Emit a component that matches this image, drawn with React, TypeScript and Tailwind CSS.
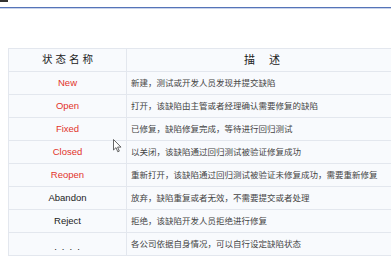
// Defect status reference table (slide screenshot).

const ROWS: { name: string; desc: string; red?: boolean }[] = [
  { name: "New", desc: "新建，测试或开发人员发现并提交缺陷", red: true },
  { name: "Open", desc: "打开，该缺陷由主管或者经理确认需要修复的缺陷", red: true },
  { name: "Fixed", desc: "已修复，缺陷修复完成，等待进行回归测试", red: true },
  { name: "Closed", desc: "以关闭，该缺陷通过回归测试被验证修复成功", red: true },
  { name: "Reopen", desc: "重新打开，该缺陷通过回归测试被验证未修复成功，需要重新修复", red: true },
  { name: "Abandon", desc: "放弃，缺陷重复或者无效，不需要提交或者处理" },
  { name: "Reject", desc: "拒绝，该缺陷开发人员拒绝进行修复" },
  { name: "....", desc: "各公司依据自身情况，可以自行设定缺陷状态" },
];

function Cursor() {
  return (
    <svg width="9" height="14" viewBox="0 0 9 14" className="absolute left-[113px] top-[139px]">
      <path d="M0.5 0.5 L0.5 11 L3 8.6 L4.8 12.8 L6.3 12.1 L4.6 8.1 L8 8.1 Z" fill="#fff" stroke="#555" strokeWidth="0.9" />
    </svg>
  );
}

export default function App() {
  return (
    <div
      className="relative h-[274px] w-[391px] overflow-hidden bg-white"
      style={{ fontFamily: '"Liberation Sans","Noto Sans CJK SC",sans-serif' }}
    >
      <div className="h-[2px] w-[8px] bg-[#333]" />
      <div className="mt-[5px] h-[1px] w-full bg-[#5574b8]" />
      <div className="h-[1px] w-full bg-[#c9d3ea]" />

      <div className="ml-[8px] mt-[39px] w-[390px]">
        <table className="w-full table-fixed border-collapse bg-[#f8fafd]">
          <colgroup>
            <col className="w-[118px]" />
            <col />
          </colgroup>
          <thead>
            <tr className="h-[23px]">
              <th className="border border-[#e3e7ee] pl-[3px] text-center text-[10.5px] font-normal tracking-[3px] text-[#222]">
                状态名称
              </th>
              <th className="border border-[#e3e7ee] pl-[14px] text-center text-[11px] font-normal tracking-[14px] text-[#222]">
                描述
              </th>
            </tr>
          </thead>
          <tbody>
            {ROWS.map((r) => (
              <tr key={r.name} className="h-[23px]">
                <td
                  className={`border border-[#e3e7ee] text-center text-[9.5px] ${
                    r.red ? "text-[#e2332b]" : "text-[#222]"
                  } ${r.name === "...." ? "pt-[6px] pl-[4px] tracking-[5px]" : ""}`}
                >
                  {r.name}
                </td>
                <td className="whitespace-nowrap border border-[#e3e7ee] pl-[4px] text-[8.5px] text-[#444]">
                  {r.desc}
                </td>
              </tr>
            ))}
          </tbody>
        </table>
      </div>
      <Cursor />
    </div>
  );
}
